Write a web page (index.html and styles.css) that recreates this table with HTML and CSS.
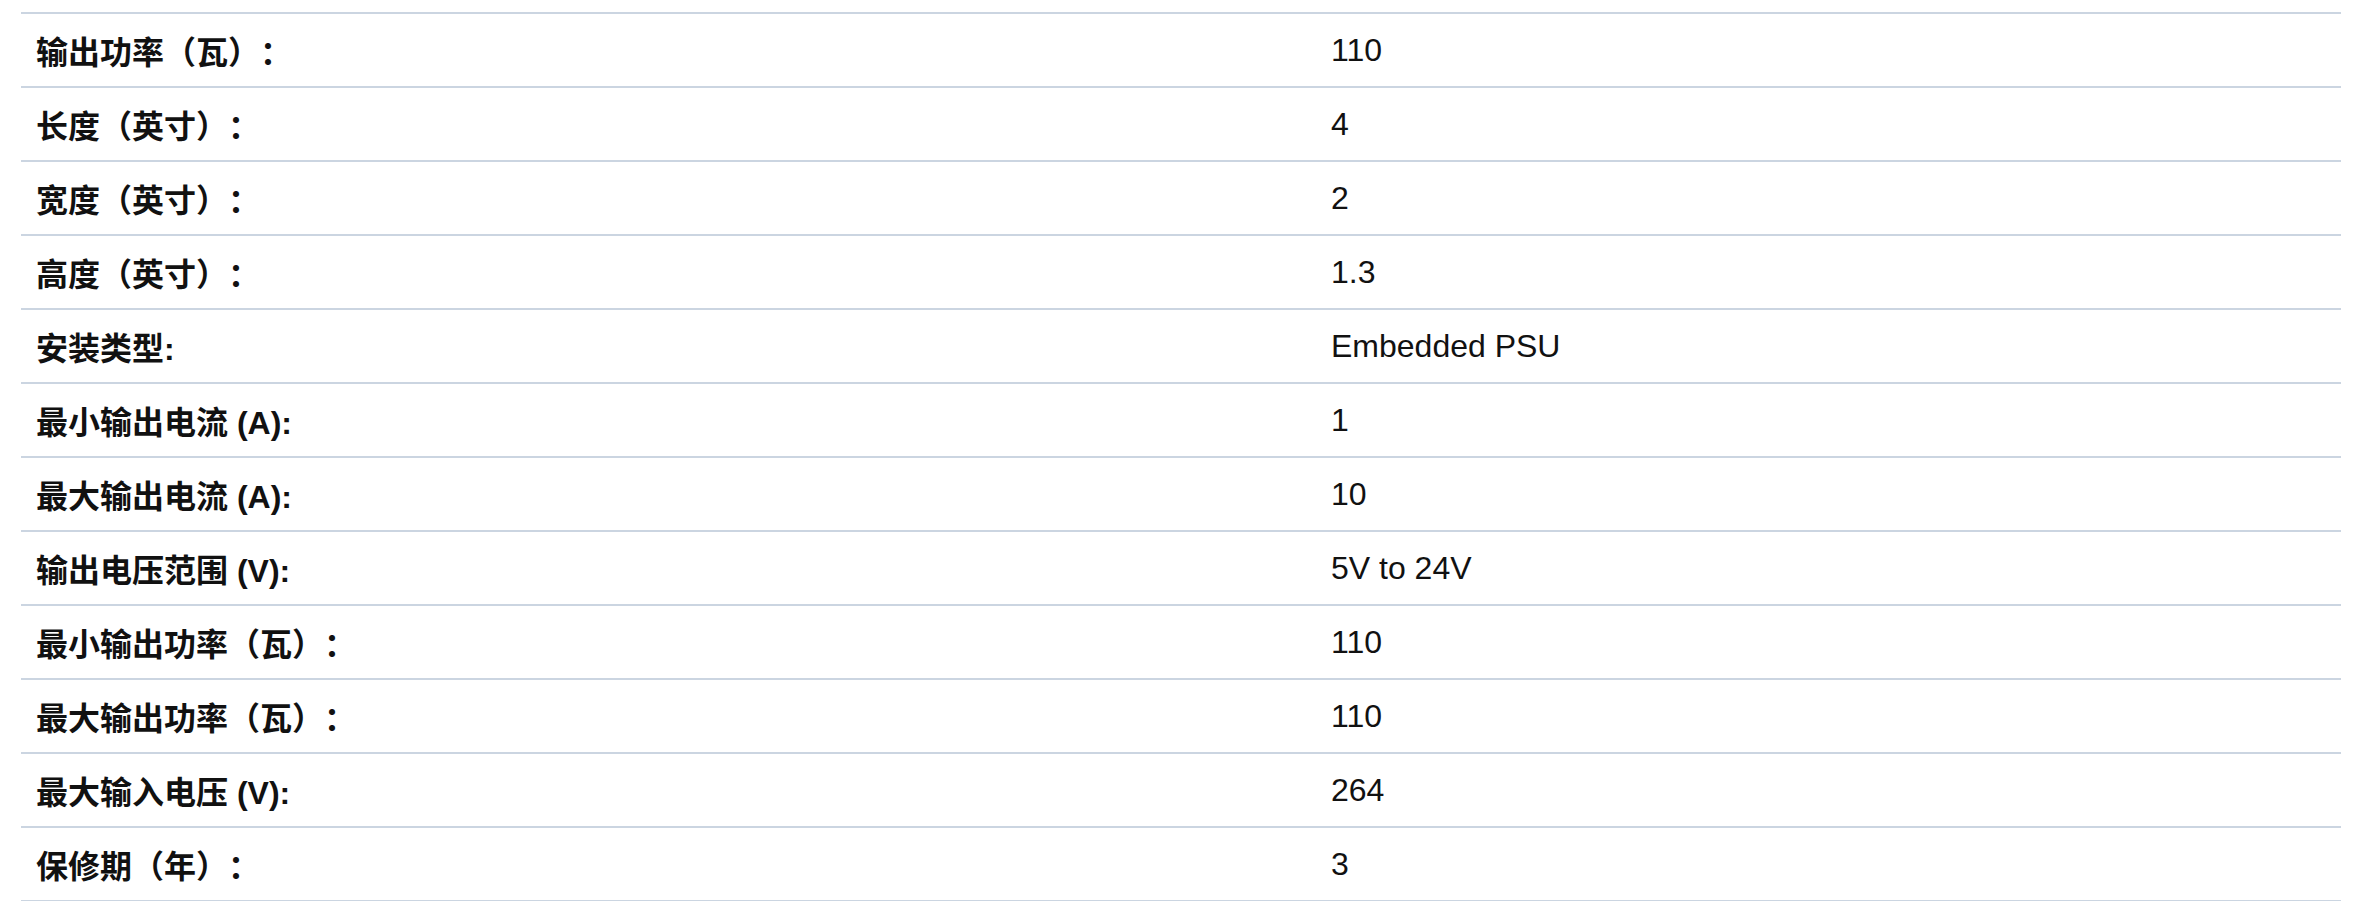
FILE: index.html
```html
<!DOCTYPE html>
<html lang="zh-CN">
<head>
<meta charset="utf-8">
<title>规格</title>
<link rel="stylesheet" href="styles.css">
</head>
<body>
<div class="specs">
  <div class="row"><div class="label">输出功率（瓦）：</div><div class="value">110</div></div>
  <div class="row"><div class="label">长度（英寸）：</div><div class="value">4</div></div>
  <div class="row"><div class="label">宽度（英寸）：</div><div class="value">2</div></div>
  <div class="row"><div class="label">高度（英寸）：</div><div class="value">1.3</div></div>
  <div class="row"><div class="label">安装类型:</div><div class="value">Embedded PSU</div></div>
  <div class="row"><div class="label">最小输出电流 (A):</div><div class="value">1</div></div>
  <div class="row"><div class="label">最大输出电流 (A):</div><div class="value">10</div></div>
  <div class="row"><div class="label">输出电压范围 (V):</div><div class="value">5V to 24V</div></div>
  <div class="row"><div class="label">最小输出功率（瓦）：</div><div class="value">110</div></div>
  <div class="row"><div class="label">最大输出功率（瓦）：</div><div class="value">110</div></div>
  <div class="row"><div class="label">最大输入电压 (V):</div><div class="value">264</div></div>
  <div class="row"><div class="label">保修期（年）：</div><div class="value">3</div></div>
</div>
</body>
</html>
```
FILE: styles.css
```css
html, body {
  margin: 0;
  padding: 0;
  background: #ffffff;
}

body {
  font-family: "Liberation Sans", Arial, "Noto Sans CJK SC", sans-serif;
  color: #111111;
  font-size: 32px;
}

.specs {
  padding: 12px 28px 0 21px;
}

.row {
  display: grid;
  grid-template-columns: 1295px 1fr;
  height: 72px;
  align-items: center;
  border-top: 2px solid #cbd5e1;
}

.row:last-child {
  border-bottom: 2px solid #cbd5e1;
}

.label {
  font-weight: bold;
  padding-left: 15px;
  white-space: nowrap;
  text-spacing-trim: space-all;
}

.value {
  padding-left: 15px;
  white-space: nowrap;
}
```
